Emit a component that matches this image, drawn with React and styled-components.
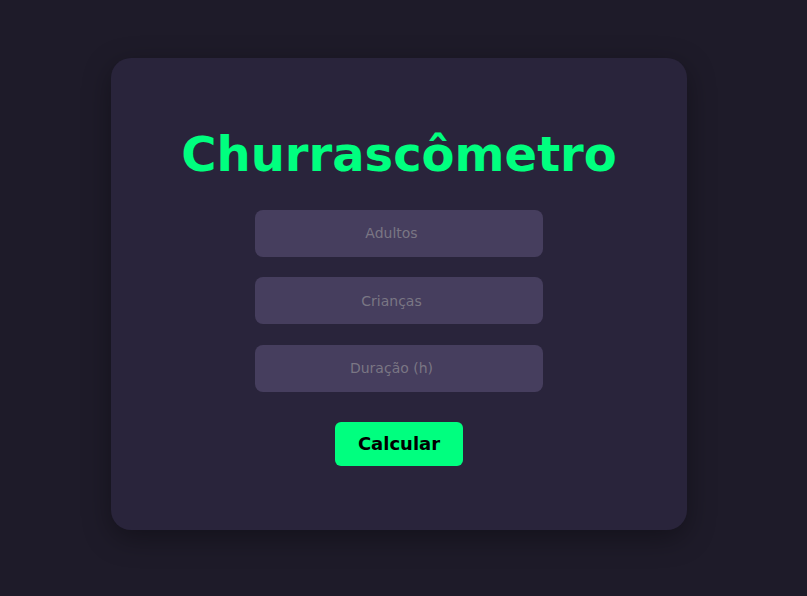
import React from 'react';
import styled, { createGlobalStyle } from 'styled-components';

const GlobalStyle = createGlobalStyle`
  * { box-sizing: border-box; }
  html, body {
    margin: 0;
    padding: 0;
    background: #1e1b29;
    font-family: "DejaVu Sans", Verdana, sans-serif;
  }
`;

const Page = styled.div`
  min-height: 100vh;
  display: flex;
  align-items: center;
  justify-content: center;
  padding: 0 9px 9px 0;
`;

const Card = styled.div`
  width: 576px;
  height: 472px;
  background: #29243b;
  border-radius: 20px;
  box-shadow: 0 8px 28px rgba(0, 0, 0, 0.35);
  padding: 68px 40px 0;
  display: flex;
  flex-direction: column;
  align-items: center;
`;

const Title = styled.h1`
  margin: 0 0 28px;
  font-size: 48px;
  font-weight: bold;
  line-height: normal;
  color: #00ff7f;
`;

const Form = styled.div`
  display: flex;
  flex-direction: column;
  align-items: center;
  gap: 20.5px;
`;

const Field = styled.input`
  width: 288px;
  height: 47px;
  border: none;
  outline: none;
  border-radius: 8px;
  background: #463e5e;
  color: #ddd;
  font-family: "DejaVu Sans", Verdana, sans-serif;
  font-size: 14px;
  text-align: center;

  &::placeholder {
    color: #7a7684;
  }
`;

const Button = styled.button`
  margin-top: 30px;
  width: 128px;
  height: 44px;
  border: none;
  border-radius: 6px;
  background: #00ff7f;
  color: #000;
  font-family: "DejaVu Sans", Verdana, sans-serif;
  font-size: 18px;
  font-weight: bold;
  cursor: pointer;
`;

const App = () => {
  return (
    <>
      <GlobalStyle />
      <Page>
        <Card>
          <Title>Churrascômetro</Title>
          <Form>
            <Field type="number" placeholder="Adultos" />
            <Field type="number" placeholder="Crianças" />
            <Field type="number" placeholder="Duração (h)" />
          </Form>
          <Button>Calcular</Button>
        </Card>
      </Page>
    </>
  );
};

export default App;
